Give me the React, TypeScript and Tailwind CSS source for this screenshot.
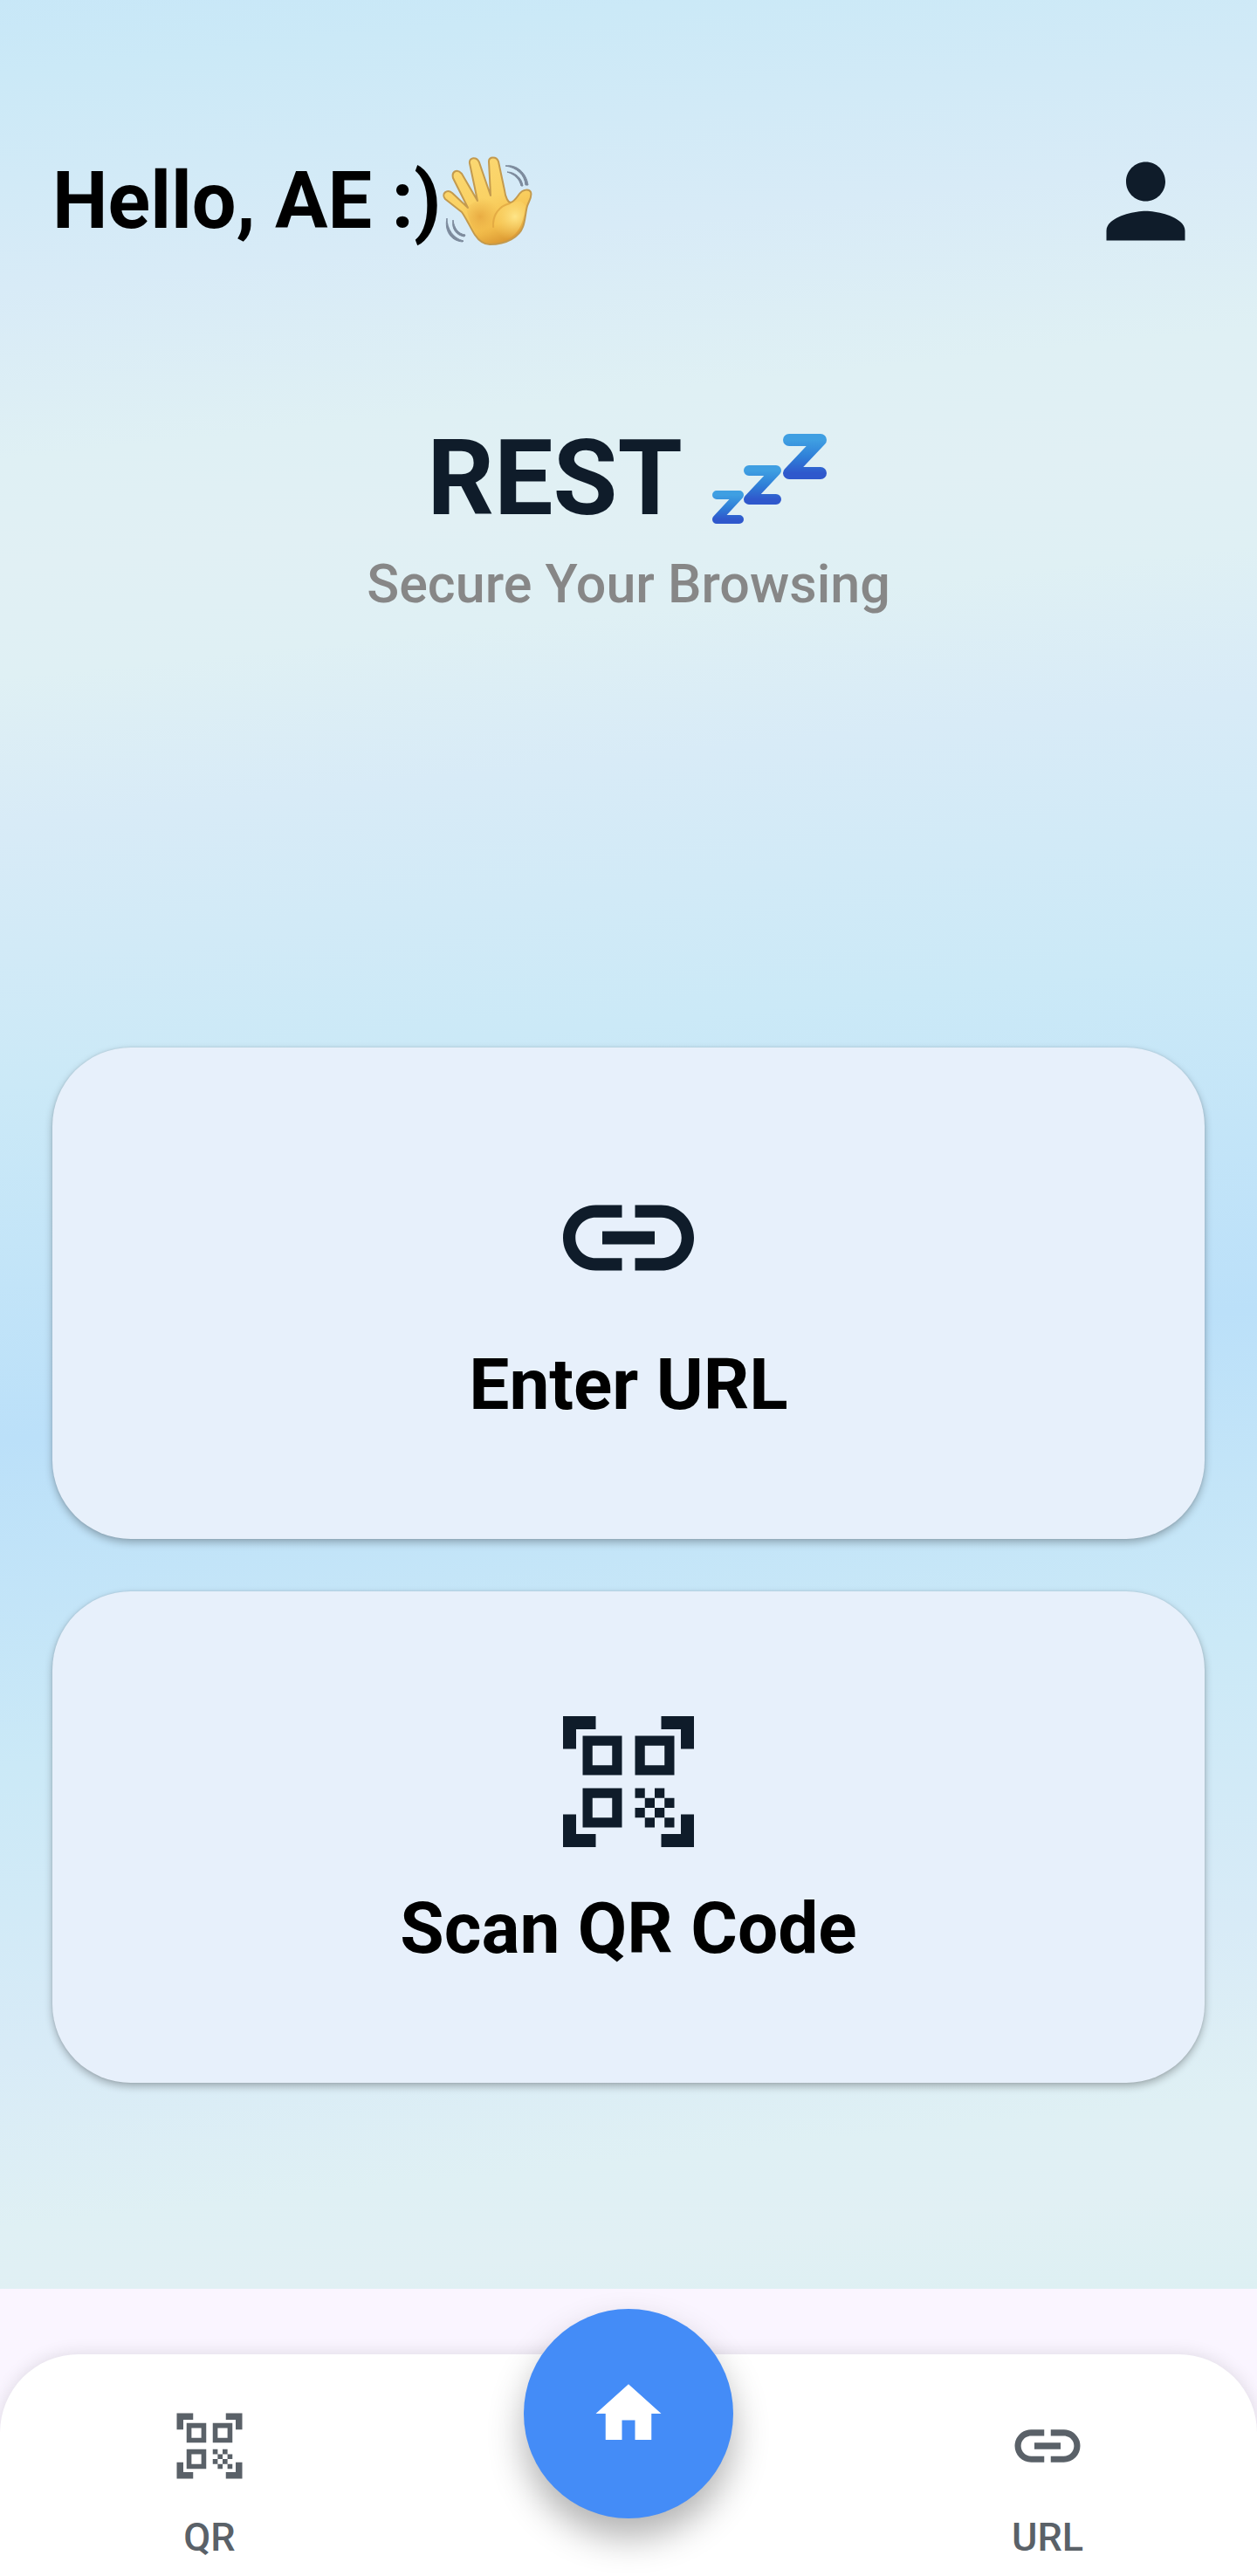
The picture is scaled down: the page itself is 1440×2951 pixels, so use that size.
import { MdHome, MdLink, MdPerson, MdQrCodeScanner } from "react-icons/md";
import type { IconType } from "react-icons";

function WavingHand() {
  return (
    <svg viewBox="0 0 108 106" className="h-[106px] w-[108px]" role="img" aria-label="Waving hand" fill="none">
      <defs>
        <linearGradient id="hand-skin" x1="20" y1="4" x2="56" y2="104" gradientUnits="userSpaceOnUse">
          <stop offset="0" stopColor="#fbd873" />
          <stop offset="0.5" stopColor="#fad264" />
          <stop offset="0.8" stopColor="#f5c14e" />
          <stop offset="1" stopColor="#dc9a33" />
        </linearGradient>
        <radialGradient id="hand-palm" cx="44" cy="70" r="22" gradientUnits="userSpaceOnUse">
          <stop offset="0" stopColor="#e3a03a" stopOpacity="0.7" />
          <stop offset="1" stopColor="#e9ae45" stopOpacity="0" />
        </radialGradient>
        <radialGradient id="hand-thumb" cx="84" cy="70" r="28" gradientUnits="userSpaceOnUse">
          <stop offset="0" stopColor="#fee588" />
          <stop offset="1" stopColor="#f9d060" stopOpacity="0" />
        </radialGradient>
      </defs>
      <path
        d="M55 102C47 102 42 97 38 91C33 83 28 72 23 65L4 50C-1 44 6 38 12 43L30 60L13 26C11 18 18 15 23 21L41 52L32 9C31 2 40 1 43 8L56 46L54 7C54 1 63 1 65 7L72 40C73 48 76 54 79 54C84 52 86 48 89 44C93 39 100 38 102 42C104 47 100 52 98 58C96 65 96 74 93 82C89 93 75 102 55 102Z"
        fill="url(#hand-skin)"
        stroke="#c39a4e"
        strokeWidth="2"
        strokeLinejoin="round"
      />
      <path d="M28 60C38 51 60 42 69 43C75 54 74 58 66 64C58 74 58 88 66 99C42 104 32 80 28 60Z" fill="url(#hand-palm)" />
      <path d="M76 56C62 60 54 80 68 98C90 94 94 74 96 58C90 48 84 54 76 56Z" fill="url(#hand-thumb)" />
      <path d="M78 55C66 58 58 68 59 82" stroke="#dda23f" strokeWidth="2" strokeLinecap="round" opacity="0.7" />
      <g fill="#7c8a9c" stroke="#7c8a9c" strokeWidth="1" strokeLinejoin="round">
        <path d="M73 12C86 10 97 20 99 34L96 34C95 22 86 14 73 12Z" />
        <path d="M75 19C84 19 92 26 93 35L91 35C89 27 84 22 75 19Z" />
        <path d="M6 72C6 84 13 95 25 98L24 99C10 98 3 86 6 72Z" />
        <path d="M13 74C14 83 19 90 27 91L26 93C17 92 11 84 13 74Z" />
      </g>
    </svg>
  );
}

function SleepMark() {
  return (
    <svg viewBox="0 0 135 103" className="h-[103px] w-[135px]" role="img" aria-label="Sleeping" fill="none">
      <defs>
        <linearGradient id="sleep-blue" x1="0" y1="0" x2="0" y2="1">
          <stop offset="0" stopColor="#3f9fe2" />
          <stop offset="0.5" stopColor="#2f80d8" />
          <stop offset="1" stopColor="#2f58cc" />
        </linearGradient>
      </defs>
      <g stroke="url(#sleep-blue)" strokeLinecap="round" strokeLinejoin="round">
        <path d="M88 7H124L88 45H124" strokeWidth="14" />
        <path d="M42 42H73L42 75H73" strokeWidth="12" />
        <path d="M5 70H31L5 98H31" strokeWidth="10" />
      </g>
    </svg>
  );
}

function ActionCard({ icon: Icon, label }: { icon: IconType; label: string }) {
  return (
    <button
      type="button"
      className="flex w-full cursor-pointer flex-col items-center gap-[30px] rounded-[90px] bg-[#e7f0fb] py-32 shadow-[0_4px_10px_rgba(0,0,0,0.28),0_0_3px_rgba(0,0,0,0.1)]"
    >
      <Icon className="size-[180px] text-[#0f1c2a]" aria-hidden="true" />
      <span className="text-[82px] leading-[97px] font-bold text-black">{label}</span>
    </button>
  );
}

function NavItem({ icon: Icon, label }: { icon: IconType; label: string }) {
  return (
    <a href="#" className="flex flex-col items-center gap-[33px] pt-[60px] pb-[18px] text-[#5a6168]">
      <Icon className="size-[90px]" aria-hidden="true" />
      <span className="text-[45px] leading-[53px] font-medium">{label}</span>
    </a>
  );
}

export default function App() {
  return (
    <div className="flex min-h-screen flex-col bg-[#faf5ff] font-['Roboto',sans-serif]">
      <main className="flex flex-1 flex-col bg-[linear-gradient(174deg,#bbe0f9_-12%,#cbe9f7_3%,#d8ebf7_12%,#dff0f4_19%,#e1f0f4_23.5%,#dff0f4_28%,#d8ebf7_34%,#cbe9f7_45%,#bbe0f9_59.5%,#cbe9f7_73%,#d8ebf7_85%,#dff0f4_92%,#e1f0f4_95.5%,#ddf0f3_100%)] px-[60px] pt-[163px]">
        <header className="flex items-center justify-between">
          <h2 className="flex items-center text-[90px] leading-[105px] font-bold text-black">
            Hello, AE :)
            <WavingHand />
          </h2>
          <button type="button" aria-label="Profile" className="cursor-pointer">
            <MdPerson className="size-[135px] text-[#0f1c2a]" />
          </button>
        </header>

        <section className="mt-[180px] flex flex-col items-center gap-[15px]">
          <h1 className="flex items-center gap-[34px] text-[120px] leading-[141px] font-bold text-[#0f1c2a]">
            REST
            <SleepMark />
          </h1>
          <p className="text-[61px] leading-[71px] font-medium text-[#878787]">Secure Your Browsing</p>
        </section>

        <section className="mt-[495px] flex flex-col gap-[60px]">
          <ActionCard icon={MdLink} label="Enter URL" />
          <ActionCard icon={MdQrCodeScanner} label="Scan QR Code" />
        </section>
      </main>

      <footer className="pt-[75px]">
        <nav className="grid grid-cols-3 rounded-t-[90px] bg-white shadow-[0_0_20px_rgba(0,0,0,0.12)]">
          <NavItem icon={MdQrCodeScanner} label="QR" />
          <button
            type="button"
            aria-label="Home"
            className="-mt-[52px] flex size-[240px] cursor-pointer items-center justify-center justify-self-center rounded-full bg-[#448cf7] shadow-[0_22px_40px_rgba(0,0,0,0.3)]"
          >
            <MdHome className="size-[90px] text-white" />
          </button>
          <NavItem icon={MdLink} label="URL" />
        </nav>
      </footer>
    </div>
  );
}
